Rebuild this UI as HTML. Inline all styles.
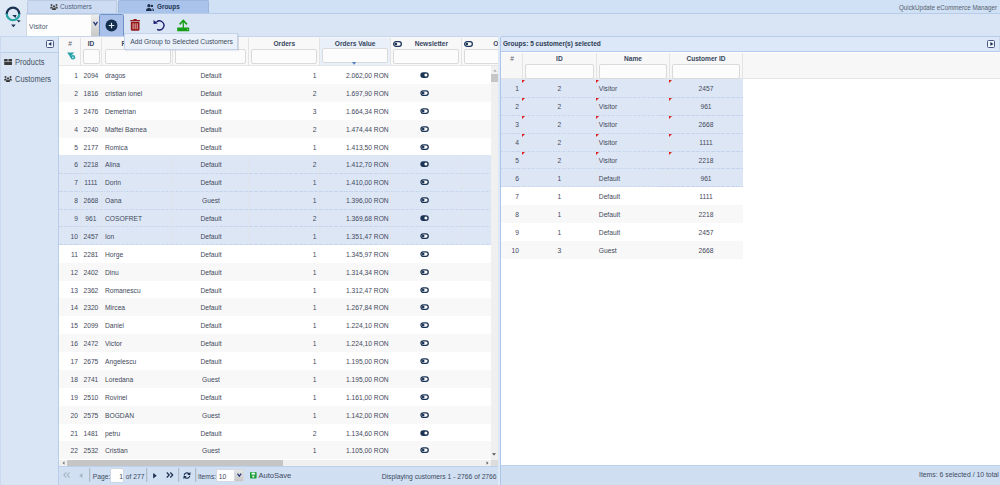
<!DOCTYPE html>
<html><head><meta charset="utf-8">
<style>
*{box-sizing:border-box;margin:0;padding:0}
html,body{width:1000px;height:485px;overflow:hidden}
body{position:relative;white-space:nowrap;background:#d0e0f5;font-family:"Liberation Sans",sans-serif;font-size:6.7px;color:#3c4858}
.a{position:absolute}
.tab{position:absolute;top:0;height:13.5px;border:1px solid #bccbdf;border-bottom:none;border-radius:2px 2px 0 0}
.hs{position:absolute;width:1px;background:#e4e4e4}
.ht{position:absolute;text-align:center;font-weight:bold;color:#36465e;font-size:6.6px;line-height:8px}
.fi{position:absolute;height:15px;background:#fcfcfc;border:1px solid #dadada;border-radius:2px}
.r,.gr{position:absolute;left:0;height:17.875px;background:#fff}
.r{width:432px}
.gr{width:241.5px}
.r.alt,.gr.alt{background:#f8f8f8}
.r.sel,.gr.sel{background:#dde6f5}
.r.sel::after,.gr.sel::after{content:"";position:absolute;left:0;right:0;bottom:-0.6px;height:1px;z-index:2;background:repeating-linear-gradient(90deg,#c6d5ee 0 1.5px,transparent 1.5px 2.5px)}
.c{position:absolute;top:1.1px;line-height:17.875px;color:#3f495b}
.tg{position:absolute;top:6px;line-height:0}
.vs{position:absolute;top:0;width:1px;height:100%;background:#dfe3ec}
.fl{position:absolute;top:0.8px;z-index:3;width:0;height:0;border-top:3px solid #e01b1b;border-right:3px solid transparent}
.sep{position:absolute;width:1px;background:#b1bbc7;box-shadow:0.5px 0 0 #c4ccd6}
.pt{position:absolute;color:#3d4a5f;line-height:8px}
</style></head><body>

<!-- logo area -->
<div class="a" style="left:0;top:0;width:26.6px;height:37px;background:#dfe8f5"></div>
<svg class="a" style="left:0;top:0" width="26" height="30" viewBox="0 0 26 30">
  <path d="M6.7 14 A6.3 6.3 0 0 1 19.3 14" fill="none" stroke="#1a3352" stroke-width="2.3"/>
  <path d="M19.3 13.8 A6.3 6.3 0 0 1 6.7 13.8" fill="none" stroke="#2aa6a6" stroke-width="2.3"/>
  <path d="M12.2 14.9 L16.5 15 L15.5 17.9 Z" fill="#1a3352"/>
  <path d="M16.8 20.1 L20.7 20.6 L18.6 22.4 Z" fill="#1a3352"/>
  <path d="M11.1 24.4 L15.7 24.4 L13.4 27.2 Z" fill="#1a3352"/>
</svg>

<!-- tabs -->
<div class="tab" style="left:26.5px;width:90px;background:#cddcf2"></div>
<svg class="a" style="left:49.5px;top:3.6px" width="8" height="6.4" viewBox="0 0 8 6.4"><circle cx="1.5" cy="1.1" r="1" fill="#4a4a4a"/><circle cx="6.5" cy="1.1" r="1" fill="#4a4a4a"/><circle cx="4" cy="2.4" r="1.1" fill="#4a4a4a"/><path d="M0 4.4Q0 2.4 1.5 2.4Q2.6 2.4 2.8 3.3L2.2 4.4Z M8 4.4Q8 2.4 6.5 2.4Q5.4 2.4 5.2 3.3L5.8 4.4Z M1.7 6.4Q1.7 3.8 4 3.8Q6.3 3.8 6.3 6.4Z" fill="#4a4a4a"/></svg>
<div class="a" style="left:59.8px;top:2.6px;color:#53627a;font-size:7.3px;line-height:8px;transform:scaleX(0.9);transform-origin:0 0">Customers</div>
<div class="tab" style="left:117.8px;width:91px;background:#a9c3ea;border-color:#a0b7dc"></div>
<svg class="a" style="left:146px;top:3.5px" width="8" height="7" viewBox="0 0 8 7"><circle cx="2.9" cy="1.7" r="1.6" fill="#1c2e4a"/><path d="M0 7 Q0 3.9 2.9 3.9 Q5.8 3.9 5.8 7Z" fill="#1c2e4a"/><circle cx="5.9" cy="1.9" r="1.2" fill="#1c2e4a"/><path d="M6.2 3.9 Q8 4.2 8 7 L6.6 7 Q6.6 5 6.2 3.9Z" fill="#1c2e4a"/></svg>
<div class="a" style="left:156.5px;top:3.1px;color:#1e3350;font-weight:bold;font-size:7.1px;line-height:8px;transform:scaleX(0.9);transform-origin:0 0">Groups</div>
<div class="a" style="left:899px;top:3.5px;font-size:7px;color:#56626f;line-height:8px;transform:scaleX(0.89);transform-origin:0 0">QuickUpdate eCommerce Manager</div>

<!-- toolbar -->
<div class="a" style="left:26px;top:13px;width:974px;height:24px;background:#d9e5f5;border-top:1px solid #b6cdea"></div>
<div class="a" style="left:26.2px;top:14.2px;width:73px;height:22.6px;background:#fdfdfd;border:1px solid #d2d9e2;border-radius:2px"></div>
<div class="a" style="left:91.2px;top:15.2px;width:7.6px;height:20.4px;background:linear-gradient(#ececec,#c8c8c8)"></div>
<div class="a" style="left:29.2px;top:22.6px;color:#4b5a70;font-size:7.2px;line-height:8px;transform:scaleX(0.94);transform-origin:0 0">Visitor</div>
<svg class="a" style="left:92.5px;top:21.3px" width="5" height="5" viewBox="0 0 5 5"><path d="M0.5 0.8 L2.5 3.8 L4.5 0.8" fill="none" stroke="#22357a" stroke-width="1.3"/></svg>
<div class="a" style="left:99.3px;top:14px;width:24.4px;height:22.6px;background:#a8c0ea;border:1px solid #7091c8;border-radius:1.5px"></div>
<svg class="a" style="left:105.3px;top:18.7px" width="13" height="13" viewBox="0 0 13 13"><circle cx="6.5" cy="6.5" r="5.95" fill="#142f4e"/><path d="M6.5 3.7V9.3M3.7 6.5H9.3" stroke="#e2eaf5" stroke-width="1.15"/></svg>
<svg class="a" style="left:130px;top:19px" width="11" height="12" viewBox="0 0 11 12"><rect x="0.1" y="0.9" width="10" height="1.3" rx="0.6" fill="#951616"/><rect x="3.4" y="0.1" width="3.4" height="1.3" rx="0.6" fill="#951616"/><path d="M0.8 2.8H9.5V10.2Q9.5 11.8 8 11.8H2.3Q0.8 11.8 0.8 10.2Z" fill="#951616"/><path d="M3.1 4.3V10.2M5.15 4.3V10.2M7.2 4.3V10.2" stroke="#eccaca" stroke-width="0.9"/></svg>
<svg class="a" style="left:153px;top:19px" width="12" height="12" viewBox="0 0 12 12"><path d="M3.5 2.95 A4.5 4.5 0 1 1 4.15 10.3" fill="none" stroke="#17186c" stroke-width="1.35"/><path d="M0.5 0.9 L0.6 5 L4.9 4.6 Z" fill="#17186c"/></svg>
<svg class="a" style="left:176.8px;top:18.5px" width="13" height="13" viewBox="0 0 13 13"><path d="M2.7 5.3 L6.3 1.4 L9.9 5.3" fill="none" stroke="#169e16" stroke-width="1.7"/><path d="M6.3 1.6V9" stroke="#169e16" stroke-width="1.3"/><rect x="0.2" y="8.6" width="12" height="3.7" rx="0.6" fill="#169e16"/><rect x="10.2" y="9.9" width="0.8" height="1" fill="#9fe09f"/></svg>

<!-- sidebar -->
<div class="a" style="left:0;top:36.4px;width:59px;height:448.6px;background:#d9e5f5;border-right:1px solid #b8cdea;border-top:1px solid #c6d8f0;border-left:1px solid #c9d9ef"></div>
<div class="a" style="left:1px;top:37.4px;width:57px;height:15.6px;background:#dae6f6;border-bottom:1px solid #bcd0ec"></div>
<div class="a" style="left:45.9px;top:40.1px;width:8.2px;height:7.8px;border:1px solid #4a5886;border-radius:1.5px;background:#eef4fc"></div>
<svg class="a" style="left:48.2px;top:42.2px" width="4" height="4" viewBox="0 0 4 4"><path d="M3.3 0.1 L0.3 1.9 L3.3 3.8Z" fill="#14284c"/></svg>
<svg class="a" style="left:4px;top:58.9px" width="8.2" height="6.4" viewBox="0 0 8.2 6.4"><rect x="0" y="0" width="3.7" height="2.5" rx="0.5" fill="#3a3a3a"/><rect x="4.4" y="0" width="3.8" height="2.5" rx="0.5" fill="#3a3a3a"/><path d="M0.2 3.1H8V5.2Q8 6.3 6.9 6.3H1.3Q0.2 6.3 0.2 5.2Z" fill="#3a3a3a"/></svg>
<div class="a" style="left:14.8px;top:57.6px;font-size:8.3px;color:#445064;line-height:9px;transform:scaleX(0.9);transform-origin:0 0">Products</div>
<svg class="a" style="left:4px;top:75.5px" width="8" height="6.4" viewBox="0 0 8 6.4"><circle cx="1.5" cy="1.1" r="1" fill="#3a3a3a"/><circle cx="6.5" cy="1.1" r="1" fill="#3a3a3a"/><circle cx="4" cy="2.4" r="1.1" fill="#3a3a3a"/><path d="M0 4.4Q0 2.4 1.5 2.4Q2.6 2.4 2.8 3.3L2.2 4.4Z M8 4.4Q8 2.4 6.5 2.4Q5.4 2.4 5.2 3.3L5.8 4.4Z M1.7 6.4Q1.7 3.8 4 3.8Q6.3 3.8 6.3 6.4Z" fill="#3a3a3a"/></svg>
<div class="a" style="left:14.8px;top:74.7px;font-size:8.3px;color:#445064;line-height:9px;transform:scaleX(0.9);transform-origin:0 0">Customers</div>

<!-- main grid -->
<div class="a" style="left:59px;top:36.8px;width:439px;height:429.2px;background:#fff"></div>
<div class="a" style="left:59px;top:36.2px;width:439px;height:29.8px;background:#f8f8f8;border-top:1px solid #c4d5ec;border-bottom:1px solid #e6e6e6"></div>
<div class="a" style="left:320px;top:37.8px;width:70px;height:27.4px;background:#e9f0fa"></div>
<i class="hs" style="left:80px;top:37.8px;height:28px"></i>
<i class="hs" style="left:101px;top:37.8px;height:28px"></i>
<i class="hs" style="left:172px;top:37.8px;height:28px"></i>
<i class="hs" style="left:248px;top:37.8px;height:28px"></i>
<i class="hs" style="left:319px;top:37.8px;height:28px"></i>
<i class="hs" style="left:390px;top:37.8px;height:28px"></i>
<i class="hs" style="left:461px;top:37.8px;height:28px"></i>
<div class="ht" style="left:59px;width:22px;top:40.4px;font-weight:normal;color:#56606e">#</div>
<svg class="a" style="left:66.5px;top:51.6px" width="9" height="8" viewBox="0 0 9 8"><path d="M0.1 0.4 H7.3 L4.4 3.6 L3.4 6.1 L2.6 4Z" fill="#27a2a8"/><circle cx="5.9" cy="5.3" r="2.3" fill="#27a2a8"/><circle cx="5.9" cy="5.4" r="0.8" fill="#d5eef0"/></svg>
<div class="ht" style="left:80.5px;width:21px;top:40.4px">ID</div>
<div class="ht" style="left:102.8px;width:71.7px;top:40.4px">First Name</div>
<div class="ht" style="left:249px;width:70.5px;top:40.4px">Orders</div>
<div class="ht" style="left:319.5px;width:71.3px;top:39.6px">Orders Value</div>
<div class="ht" style="left:396px;width:70.7px;top:40.4px">Newsletter</div>
<div class="ht" style="left:493.2px;top:40.4px;width:4.8px;overflow:hidden;text-align:left">Optin</div>
<svg class="a" style="left:392.8px;top:41px" width="9" height="6" viewBox="0 0 9 6"><rect x="0.65" y="0.65" width="7.7" height="4.7" rx="2.35" fill="#fff" stroke="#1d3557" stroke-width="1.3"/><circle cx="2.9" cy="3" r="1.3" fill="#1d3557"/></svg>
<svg class="a" style="left:463.6px;top:41px" width="9" height="6" viewBox="0 0 9 6"><rect x="0.65" y="0.65" width="7.7" height="4.7" rx="2.35" fill="#fff" stroke="#1d3557" stroke-width="1.3"/><circle cx="2.9" cy="3" r="1.3" fill="#1d3557"/></svg>
<div class="fi" style="left:83px;top:49px;width:17px"></div>
<div class="fi" style="left:105px;top:49px;width:66px"></div>
<div class="fi" style="left:175px;top:49px;width:71px"></div>
<div class="fi" style="left:251px;top:49px;width:66px"></div>
<div class="fi" style="left:322px;top:48px;width:66px"></div>
<div class="fi" style="left:393px;top:49px;width:66px"></div>
<div class="fi" style="left:464px;top:49px;width:66px"></div>
<svg class="a" style="left:352px;top:62px" width="4.2" height="2.6" viewBox="0 0 4.2 2.6"><path d="M0 0H4.2L2.6 2.3Q2.1 2.7 1.6 2.3Z" fill="#5a86c6"/></svg>
<div class="a" style="left:59px;top:66px;width:432px;height:393.6px;overflow:hidden">
<div class="a" style="left:0;top:-66px;width:432px;height:466px">
<div class="r" style="top:66.000px"><span class="c" style="left:0;width:19px;text-align:right">1</span><span class="c" style="left:21.5px;width:20.8px;text-align:center">2094</span><span class="c" style="left:46px">dragos</span><span class="c" style="left:114px;width:76px;text-align:center">Default</span><span class="c" style="left:190px;width:67.5px;text-align:right">1</span><span class="c" style="left:260.5px;width:69.2px;text-align:right">2.062,00 RON</span><span class="tg" style="left:361.2px"><svg width="9" height="6" viewBox="0 0 9 6"><rect x="0.3" y="0.2" width="8.5" height="5.8" rx="2.9" fill="#1b3354"/><circle cx="5.9" cy="3.1" r="1.5" fill="#fff"/></svg></span></div>
<div class="r alt" style="top:83.875px"><span class="c" style="left:0;width:19px;text-align:right">2</span><span class="c" style="left:21.5px;width:20.8px;text-align:center">1816</span><span class="c" style="left:46px">cristian ionel</span><span class="c" style="left:114px;width:76px;text-align:center">Default</span><span class="c" style="left:190px;width:67.5px;text-align:right">2</span><span class="c" style="left:260.5px;width:69.2px;text-align:right">1.697,90 RON</span><span class="tg" style="left:361.2px"><svg width="9" height="6" viewBox="0 0 9 6"><rect x="0.95" y="0.85" width="7.3" height="4.5" rx="2.25" fill="#fff" stroke="#1b3354" stroke-width="1.3"/><circle cx="3.2" cy="3.1" r="1.3" fill="#1b3354"/></svg></span></div>
<div class="r" style="top:101.750px"><span class="c" style="left:0;width:19px;text-align:right">3</span><span class="c" style="left:21.5px;width:20.8px;text-align:center">2476</span><span class="c" style="left:46px">Demetrian</span><span class="c" style="left:114px;width:76px;text-align:center">Default</span><span class="c" style="left:190px;width:67.5px;text-align:right">3</span><span class="c" style="left:260.5px;width:69.2px;text-align:right">1.664,34 RON</span><span class="tg" style="left:361.2px"><svg width="9" height="6" viewBox="0 0 9 6"><rect x="0.95" y="0.85" width="7.3" height="4.5" rx="2.25" fill="#fff" stroke="#1b3354" stroke-width="1.3"/><circle cx="3.2" cy="3.1" r="1.3" fill="#1b3354"/></svg></span></div>
<div class="r alt" style="top:119.625px"><span class="c" style="left:0;width:19px;text-align:right">4</span><span class="c" style="left:21.5px;width:20.8px;text-align:center">2240</span><span class="c" style="left:46px">Maftei Barnea</span><span class="c" style="left:114px;width:76px;text-align:center">Default</span><span class="c" style="left:190px;width:67.5px;text-align:right">2</span><span class="c" style="left:260.5px;width:69.2px;text-align:right">1.474,44 RON</span><span class="tg" style="left:361.2px"><svg width="9" height="6" viewBox="0 0 9 6"><rect x="0.95" y="0.85" width="7.3" height="4.5" rx="2.25" fill="#fff" stroke="#1b3354" stroke-width="1.3"/><circle cx="3.2" cy="3.1" r="1.3" fill="#1b3354"/></svg></span></div>
<div class="r" style="top:137.500px"><span class="c" style="left:0;width:19px;text-align:right">5</span><span class="c" style="left:21.5px;width:20.8px;text-align:center">2177</span><span class="c" style="left:46px">Romica</span><span class="c" style="left:114px;width:76px;text-align:center">Default</span><span class="c" style="left:190px;width:67.5px;text-align:right">1</span><span class="c" style="left:260.5px;width:69.2px;text-align:right">1.413,50 RON</span><span class="tg" style="left:361.2px"><svg width="9" height="6" viewBox="0 0 9 6"><rect x="0.95" y="0.85" width="7.3" height="4.5" rx="2.25" fill="#fff" stroke="#1b3354" stroke-width="1.3"/><circle cx="3.2" cy="3.1" r="1.3" fill="#1b3354"/></svg></span></div>
<div class="r sel" style="top:155.375px"><i class="vs" style="left:21px"></i><i class="vs" style="left:42px"></i><i class="vs" style="left:113px"></i><i class="vs" style="left:189px"></i><i class="vs" style="left:260px"></i><i class="vs" style="left:331px"></i><i class="vs" style="left:402px"></i><span class="c" style="left:0;width:19px;text-align:right">6</span><span class="c" style="left:21.5px;width:20.8px;text-align:center">2218</span><span class="c" style="left:46px">Alina</span><span class="c" style="left:114px;width:76px;text-align:center">Default</span><span class="c" style="left:190px;width:67.5px;text-align:right">2</span><span class="c" style="left:260.5px;width:69.2px;text-align:right">1.412,70 RON</span><span class="tg" style="left:361.2px"><svg width="9" height="6" viewBox="0 0 9 6"><rect x="0.3" y="0.2" width="8.5" height="5.8" rx="2.9" fill="#1b3354"/><circle cx="5.9" cy="3.1" r="1.5" fill="#fff"/></svg></span></div>
<div class="r sel" style="top:173.250px"><i class="vs" style="left:21px"></i><i class="vs" style="left:42px"></i><i class="vs" style="left:113px"></i><i class="vs" style="left:189px"></i><i class="vs" style="left:260px"></i><i class="vs" style="left:331px"></i><i class="vs" style="left:402px"></i><span class="c" style="left:0;width:19px;text-align:right">7</span><span class="c" style="left:21.5px;width:20.8px;text-align:center">1111</span><span class="c" style="left:46px">Dorin</span><span class="c" style="left:114px;width:76px;text-align:center">Default</span><span class="c" style="left:190px;width:67.5px;text-align:right">1</span><span class="c" style="left:260.5px;width:69.2px;text-align:right">1.410,00 RON</span><span class="tg" style="left:361.2px"><svg width="9" height="6" viewBox="0 0 9 6"><rect x="0.95" y="0.85" width="7.3" height="4.5" rx="2.25" fill="#fff" stroke="#1b3354" stroke-width="1.3"/><circle cx="3.2" cy="3.1" r="1.3" fill="#1b3354"/></svg></span></div>
<div class="r sel" style="top:191.125px"><i class="vs" style="left:21px"></i><i class="vs" style="left:42px"></i><i class="vs" style="left:113px"></i><i class="vs" style="left:189px"></i><i class="vs" style="left:260px"></i><i class="vs" style="left:331px"></i><i class="vs" style="left:402px"></i><span class="c" style="left:0;width:19px;text-align:right">8</span><span class="c" style="left:21.5px;width:20.8px;text-align:center">2668</span><span class="c" style="left:46px">Oana</span><span class="c" style="left:114px;width:76px;text-align:center">Guest</span><span class="c" style="left:190px;width:67.5px;text-align:right">1</span><span class="c" style="left:260.5px;width:69.2px;text-align:right">1.396,00 RON</span><span class="tg" style="left:361.2px"><svg width="9" height="6" viewBox="0 0 9 6"><rect x="0.95" y="0.85" width="7.3" height="4.5" rx="2.25" fill="#fff" stroke="#1b3354" stroke-width="1.3"/><circle cx="3.2" cy="3.1" r="1.3" fill="#1b3354"/></svg></span></div>
<div class="r sel" style="top:209.000px"><i class="vs" style="left:21px"></i><i class="vs" style="left:42px"></i><i class="vs" style="left:113px"></i><i class="vs" style="left:189px"></i><i class="vs" style="left:260px"></i><i class="vs" style="left:331px"></i><i class="vs" style="left:402px"></i><span class="c" style="left:0;width:19px;text-align:right">9</span><span class="c" style="left:21.5px;width:20.8px;text-align:center">961</span><span class="c" style="left:46px">COSOFRET</span><span class="c" style="left:114px;width:76px;text-align:center">Default</span><span class="c" style="left:190px;width:67.5px;text-align:right">2</span><span class="c" style="left:260.5px;width:69.2px;text-align:right">1.369,68 RON</span><span class="tg" style="left:361.2px"><svg width="9" height="6" viewBox="0 0 9 6"><rect x="0.3" y="0.2" width="8.5" height="5.8" rx="2.9" fill="#1b3354"/><circle cx="5.9" cy="3.1" r="1.5" fill="#fff"/></svg></span></div>
<div class="r sel" style="top:226.875px"><i class="vs" style="left:21px"></i><i class="vs" style="left:42px"></i><i class="vs" style="left:113px"></i><i class="vs" style="left:189px"></i><i class="vs" style="left:260px"></i><i class="vs" style="left:331px"></i><i class="vs" style="left:402px"></i><span class="c" style="left:0;width:19px;text-align:right">10</span><span class="c" style="left:21.5px;width:20.8px;text-align:center">2457</span><span class="c" style="left:46px">Ion</span><span class="c" style="left:114px;width:76px;text-align:center">Default</span><span class="c" style="left:190px;width:67.5px;text-align:right">1</span><span class="c" style="left:260.5px;width:69.2px;text-align:right">1.351,47 RON</span><span class="tg" style="left:361.2px"><svg width="9" height="6" viewBox="0 0 9 6"><rect x="0.95" y="0.85" width="7.3" height="4.5" rx="2.25" fill="#fff" stroke="#1b3354" stroke-width="1.3"/><circle cx="3.2" cy="3.1" r="1.3" fill="#1b3354"/></svg></span></div>
<div class="r" style="top:244.750px"><span class="c" style="left:0;width:19px;text-align:right">11</span><span class="c" style="left:21.5px;width:20.8px;text-align:center">2281</span><span class="c" style="left:46px">Horge</span><span class="c" style="left:114px;width:76px;text-align:center">Default</span><span class="c" style="left:190px;width:67.5px;text-align:right">1</span><span class="c" style="left:260.5px;width:69.2px;text-align:right">1.345,97 RON</span><span class="tg" style="left:361.2px"><svg width="9" height="6" viewBox="0 0 9 6"><rect x="0.95" y="0.85" width="7.3" height="4.5" rx="2.25" fill="#fff" stroke="#1b3354" stroke-width="1.3"/><circle cx="3.2" cy="3.1" r="1.3" fill="#1b3354"/></svg></span></div>
<div class="r alt" style="top:262.625px"><span class="c" style="left:0;width:19px;text-align:right">12</span><span class="c" style="left:21.5px;width:20.8px;text-align:center">2402</span><span class="c" style="left:46px">Dinu</span><span class="c" style="left:114px;width:76px;text-align:center">Default</span><span class="c" style="left:190px;width:67.5px;text-align:right">1</span><span class="c" style="left:260.5px;width:69.2px;text-align:right">1.314,34 RON</span><span class="tg" style="left:361.2px"><svg width="9" height="6" viewBox="0 0 9 6"><rect x="0.95" y="0.85" width="7.3" height="4.5" rx="2.25" fill="#fff" stroke="#1b3354" stroke-width="1.3"/><circle cx="3.2" cy="3.1" r="1.3" fill="#1b3354"/></svg></span></div>
<div class="r" style="top:280.500px"><span class="c" style="left:0;width:19px;text-align:right">13</span><span class="c" style="left:21.5px;width:20.8px;text-align:center">2362</span><span class="c" style="left:46px">Romanescu</span><span class="c" style="left:114px;width:76px;text-align:center">Default</span><span class="c" style="left:190px;width:67.5px;text-align:right">1</span><span class="c" style="left:260.5px;width:69.2px;text-align:right">1.312,47 RON</span><span class="tg" style="left:361.2px"><svg width="9" height="6" viewBox="0 0 9 6"><rect x="0.95" y="0.85" width="7.3" height="4.5" rx="2.25" fill="#fff" stroke="#1b3354" stroke-width="1.3"/><circle cx="3.2" cy="3.1" r="1.3" fill="#1b3354"/></svg></span></div>
<div class="r alt" style="top:298.375px"><span class="c" style="left:0;width:19px;text-align:right">14</span><span class="c" style="left:21.5px;width:20.8px;text-align:center">2320</span><span class="c" style="left:46px">Mircea</span><span class="c" style="left:114px;width:76px;text-align:center">Default</span><span class="c" style="left:190px;width:67.5px;text-align:right">1</span><span class="c" style="left:260.5px;width:69.2px;text-align:right">1.267,84 RON</span><span class="tg" style="left:361.2px"><svg width="9" height="6" viewBox="0 0 9 6"><rect x="0.95" y="0.85" width="7.3" height="4.5" rx="2.25" fill="#fff" stroke="#1b3354" stroke-width="1.3"/><circle cx="3.2" cy="3.1" r="1.3" fill="#1b3354"/></svg></span></div>
<div class="r" style="top:316.250px"><span class="c" style="left:0;width:19px;text-align:right">15</span><span class="c" style="left:21.5px;width:20.8px;text-align:center">2099</span><span class="c" style="left:46px">Daniel</span><span class="c" style="left:114px;width:76px;text-align:center">Default</span><span class="c" style="left:190px;width:67.5px;text-align:right">1</span><span class="c" style="left:260.5px;width:69.2px;text-align:right">1.224,10 RON</span><span class="tg" style="left:361.2px"><svg width="9" height="6" viewBox="0 0 9 6"><rect x="0.95" y="0.85" width="7.3" height="4.5" rx="2.25" fill="#fff" stroke="#1b3354" stroke-width="1.3"/><circle cx="3.2" cy="3.1" r="1.3" fill="#1b3354"/></svg></span></div>
<div class="r alt" style="top:334.125px"><span class="c" style="left:0;width:19px;text-align:right">16</span><span class="c" style="left:21.5px;width:20.8px;text-align:center">2472</span><span class="c" style="left:46px">Victor</span><span class="c" style="left:114px;width:76px;text-align:center">Default</span><span class="c" style="left:190px;width:67.5px;text-align:right">1</span><span class="c" style="left:260.5px;width:69.2px;text-align:right">1.224,10 RON</span><span class="tg" style="left:361.2px"><svg width="9" height="6" viewBox="0 0 9 6"><rect x="0.95" y="0.85" width="7.3" height="4.5" rx="2.25" fill="#fff" stroke="#1b3354" stroke-width="1.3"/><circle cx="3.2" cy="3.1" r="1.3" fill="#1b3354"/></svg></span></div>
<div class="r" style="top:352.000px"><span class="c" style="left:0;width:19px;text-align:right">17</span><span class="c" style="left:21.5px;width:20.8px;text-align:center">2675</span><span class="c" style="left:46px">Angelescu</span><span class="c" style="left:114px;width:76px;text-align:center">Default</span><span class="c" style="left:190px;width:67.5px;text-align:right">1</span><span class="c" style="left:260.5px;width:69.2px;text-align:right">1.195,00 RON</span><span class="tg" style="left:361.2px"><svg width="9" height="6" viewBox="0 0 9 6"><rect x="0.95" y="0.85" width="7.3" height="4.5" rx="2.25" fill="#fff" stroke="#1b3354" stroke-width="1.3"/><circle cx="3.2" cy="3.1" r="1.3" fill="#1b3354"/></svg></span></div>
<div class="r alt" style="top:369.875px"><span class="c" style="left:0;width:19px;text-align:right">18</span><span class="c" style="left:21.5px;width:20.8px;text-align:center">2741</span><span class="c" style="left:46px">Loredana</span><span class="c" style="left:114px;width:76px;text-align:center">Guest</span><span class="c" style="left:190px;width:67.5px;text-align:right">1</span><span class="c" style="left:260.5px;width:69.2px;text-align:right">1.195,00 RON</span><span class="tg" style="left:361.2px"><svg width="9" height="6" viewBox="0 0 9 6"><rect x="0.95" y="0.85" width="7.3" height="4.5" rx="2.25" fill="#fff" stroke="#1b3354" stroke-width="1.3"/><circle cx="3.2" cy="3.1" r="1.3" fill="#1b3354"/></svg></span></div>
<div class="r" style="top:387.750px"><span class="c" style="left:0;width:19px;text-align:right">19</span><span class="c" style="left:21.5px;width:20.8px;text-align:center">2510</span><span class="c" style="left:46px">Rovinel</span><span class="c" style="left:114px;width:76px;text-align:center">Default</span><span class="c" style="left:190px;width:67.5px;text-align:right">1</span><span class="c" style="left:260.5px;width:69.2px;text-align:right">1.161,00 RON</span><span class="tg" style="left:361.2px"><svg width="9" height="6" viewBox="0 0 9 6"><rect x="0.95" y="0.85" width="7.3" height="4.5" rx="2.25" fill="#fff" stroke="#1b3354" stroke-width="1.3"/><circle cx="3.2" cy="3.1" r="1.3" fill="#1b3354"/></svg></span></div>
<div class="r alt" style="top:405.625px"><span class="c" style="left:0;width:19px;text-align:right">20</span><span class="c" style="left:21.5px;width:20.8px;text-align:center">2575</span><span class="c" style="left:46px">BOGDAN</span><span class="c" style="left:114px;width:76px;text-align:center">Guest</span><span class="c" style="left:190px;width:67.5px;text-align:right">1</span><span class="c" style="left:260.5px;width:69.2px;text-align:right">1.142,00 RON</span><span class="tg" style="left:361.2px"><svg width="9" height="6" viewBox="0 0 9 6"><rect x="0.95" y="0.85" width="7.3" height="4.5" rx="2.25" fill="#fff" stroke="#1b3354" stroke-width="1.3"/><circle cx="3.2" cy="3.1" r="1.3" fill="#1b3354"/></svg></span></div>
<div class="r" style="top:423.500px"><span class="c" style="left:0;width:19px;text-align:right">21</span><span class="c" style="left:21.5px;width:20.8px;text-align:center">1481</span><span class="c" style="left:46px">petru</span><span class="c" style="left:114px;width:76px;text-align:center">Default</span><span class="c" style="left:190px;width:67.5px;text-align:right">2</span><span class="c" style="left:260.5px;width:69.2px;text-align:right">1.134,60 RON</span><span class="tg" style="left:361.2px"><svg width="9" height="6" viewBox="0 0 9 6"><rect x="0.3" y="0.2" width="8.5" height="5.8" rx="2.9" fill="#1b3354"/><circle cx="5.9" cy="3.1" r="1.5" fill="#fff"/></svg></span></div>
<div class="r alt" style="top:441.375px"><span class="c" style="left:0;width:19px;text-align:right">22</span><span class="c" style="left:21.5px;width:20.8px;text-align:center">2532</span><span class="c" style="left:46px">Cristian</span><span class="c" style="left:114px;width:76px;text-align:center">Guest</span><span class="c" style="left:190px;width:67.5px;text-align:right">1</span><span class="c" style="left:260.5px;width:69.2px;text-align:right">1.105,00 RON</span><span class="tg" style="left:361.2px"><svg width="9" height="6" viewBox="0 0 9 6"><rect x="0.95" y="0.85" width="7.3" height="4.5" rx="2.25" fill="#fff" stroke="#1b3354" stroke-width="1.3"/><circle cx="3.2" cy="3.1" r="1.3" fill="#1b3354"/></svg></span></div>
</div></div>
<!-- vscroll -->
<div class="a" style="left:491px;top:66px;width:7px;height:393.6px;background:#f0f0f0"></div>
<div class="a" style="left:491.4px;top:74px;width:6.4px;height:8px;background:#c6c6c6"></div>
<svg class="a" style="left:492.5px;top:69px" width="4" height="3" viewBox="0 0 4 3"><path d="M0.2 2.5H3.8L2 0.7Z" fill="#a0a0a0"/></svg>
<svg class="a" style="left:492.3px;top:453.2px" width="4" height="3" viewBox="0 0 4 3"><path d="M0 0.3H4L2 2.6Z" fill="#505050"/></svg>
<!-- hscroll -->
<div class="a" style="left:59px;top:459.6px;width:432px;height:6.4px;background:#f0f0f0"></div>
<div class="a" style="left:67px;top:459.9px;width:216.3px;height:5.8px;background:#c5c5c5"></div>
<svg class="a" style="left:61.5px;top:461px" width="3" height="4" viewBox="0 0 3 4"><path d="M2.5 0.2V3.8L0.5 2Z" fill="#707070"/></svg>
<svg class="a" style="left:485.5px;top:461px" width="3" height="4" viewBox="0 0 3 4"><path d="M0.5 0.2V3.8L2.5 2Z" fill="#606060"/></svg>
<div class="a" style="left:491px;top:459.6px;width:7px;height:6.4px;background:#dcdcdc"></div>

<!-- tooltip -->
<div class="a" style="left:124px;top:33.2px;width:114.2px;height:16.8px;background:#eaf1fb;border:1px solid #c4d3e8;box-shadow:0.5px 1px 1px rgba(60,80,110,0.18)"></div>
<div class="a" style="left:130.2px;top:38.1px;font-size:6.75px;line-height:8px;color:#3f4c60">Add Group to Selected Customers</div>

<!-- pager -->
<div class="a" style="left:59px;top:466px;width:439px;height:19px;background:#d0dff1;border-top:1px solid #bad0ee"></div>
<svg class="a" style="left:62.8px;top:472.2px" width="8" height="6" viewBox="0 0 8 6"><path d="M3.3 0.4L0.9 3L3.3 5.6M6.6 0.4L4.2 3L6.6 5.6" fill="none" stroke="#a7b3c4" stroke-width="1.1"/></svg>
<svg class="a" style="left:78.6px;top:472.8px" width="4" height="5.4" viewBox="0 0 4 5.4"><path d="M3.4 0V5.2L0.2 2.6Z" fill="#a7b3c4"/></svg>
<i class="sep" style="left:89.2px;top:468.4px;height:14px"></i>
<div class="pt" style="left:92.8px;top:472.6px">Page:</div>
<div class="a" style="left:110.2px;top:468px;width:13.8px;height:15px;background:#fff;border:1px solid #cfd7e1;border-radius:2px"></div>
<div class="pt" style="left:119.2px;top:472.6px">1</div>
<div class="pt" style="left:125.8px;top:472.6px">of 277</div>
<i class="sep" style="left:146px;top:468.4px;height:14px"></i>
<svg class="a" style="left:152.8px;top:472.6px" width="4" height="6" viewBox="0 0 4 6"><path d="M0.2 0V5.5L3.7 2.75Z" fill="#1b2c4c"/></svg>
<svg class="a" style="left:165.5px;top:472.3px" width="8" height="6" viewBox="0 0 8 6"><path d="M0.8 0.5L3.2 3L0.8 5.5M4.3 0.5L6.7 3L4.3 5.5" fill="none" stroke="#1b2c4c" stroke-width="1.2"/></svg>
<i class="sep" style="left:178.2px;top:468.4px;height:14px"></i>
<svg class="a" style="left:182.8px;top:471.8px" width="8" height="7.2" viewBox="0 0 8 7.2"><path d="M1.1 3.4 A2.8 2.8 0 0 1 6 1.9" fill="none" stroke="#1b2c4c" stroke-width="1.1"/><path d="M6.8 3.8 A2.8 2.8 0 0 1 1.9 5.3" fill="none" stroke="#1b2c4c" stroke-width="1.1"/><path d="M7.4 0V3.1H4.3Z M0.5 7.2V4.1H3.6Z" fill="#1b2c4c"/></svg>
<i class="sep" style="left:195px;top:468.4px;height:14px"></i>
<div class="pt" style="left:197.9px;top:472.6px">Items:</div>
<div class="a" style="left:216.4px;top:469px;width:19px;height:13.4px;background:#fdfdfd;border:1px solid #d3dae3;border-radius:2px 0 0 2px"></div>
<div class="pt" style="left:218.8px;top:472.6px">10</div>
<div class="a" style="left:235.3px;top:469px;width:9.2px;height:13.4px;background:linear-gradient(#e6e6e6,#c6c6c6);border:1px solid #d3dae3;border-left:none"></div>
<svg class="a" style="left:237.4px;top:472.6px" width="5" height="4" viewBox="0 0 5 4"><path d="M0.4 0.6 L2.3 3.2 L4.2 0.6" fill="none" stroke="#22357a" stroke-width="1.2"/></svg>
<svg class="a" style="left:249.6px;top:472.2px" width="7" height="7" viewBox="0 0 7 7"><rect x="0" y="0" width="6.6" height="6.6" rx="0.8" fill="#1f9d3a"/><rect x="1.5" y="0.6" width="3.6" height="2" fill="#eaf7ee"/><circle cx="3.3" cy="4.6" r="1.1" fill="#eaf7ee"/></svg>
<div class="pt" style="left:258.4px;top:472.3px;font-size:7.6px">AutoSave</div>
<div class="pt" style="left:381.7px;top:473.4px;font-size:6.74px">Displaying customers 1 - 2766 of 2766</div>

<!-- splitter -->
<div class="a" style="left:498px;top:36.8px;width:2px;height:448.2px;background:#dfe8f5"></div>

<!-- right panel -->
<div class="a" style="left:500px;top:36.5px;width:500px;height:448.5px;background:#fff;border-left:1px solid #aac6ec"></div>
<div class="a" style="left:501px;top:36.2px;width:499px;height:16.3px;background:#dce7f7;border-bottom:1px solid #b3cbec;border-top:1px solid #b7cde9"></div>
<div class="a" style="left:503px;top:40.2px;line-height:8px;font-weight:bold;color:#2c3b54;font-size:6.53px">Groups: 5 customer(s) selected</div>
<div class="a" style="left:987px;top:40.1px;width:8.3px;height:7.8px;border:1px solid #4a5886;border-radius:1.5px;background:#eef4fc"></div>
<svg class="a" style="left:989.6px;top:42.2px" width="4" height="4" viewBox="0 0 4 4"><path d="M0.4 0.1 L3.4 1.9 L0.4 3.8Z" fill="#14284c"/></svg>
<div class="a" style="left:501px;top:52.5px;width:499px;height:26.8px;background:#f7f7f7;border-bottom:1px solid #e6e6e6"></div>
<i class="hs" style="left:522px;top:52.5px;height:26.8px"></i>
<i class="hs" style="left:596px;top:52.5px;height:26.8px"></i>
<i class="hs" style="left:669px;top:52.5px;height:26.8px"></i>
<i class="hs" style="left:742px;top:52.5px;height:26.8px"></i>
<div class="ht" style="left:501px;width:22px;top:54.6px;font-weight:normal;color:#56606e">#</div>
<div class="ht" style="left:522.4px;width:74px;top:54.6px">ID</div>
<div class="ht" style="left:596.4px;width:73.2px;top:54.6px">Name</div>
<div class="ht" style="left:669.6px;width:72.8px;top:54.6px">Customer ID</div>
<div class="fi" style="left:525px;top:64px;width:68.5px"></div>
<div class="fi" style="left:599px;top:64px;width:68px"></div>
<div class="fi" style="left:672px;top:64px;width:68px"></div>
<div class="a" style="left:501px;top:79.3px;width:499px;height:386px;overflow:hidden">
<div class="a" style="left:0;top:-79.3px">
<div class="gr sel" style="top:79.300px"><i class="vs" style="left:21px"></i><i class="vs" style="left:95px"></i><i class="vs" style="left:168px"></i><span class="c" style="left:0;width:18px;text-align:right">1</span><span class="c" style="left:21.4px;width:74px;text-align:center">2</span><span class="c" style="left:97.8px">Visitor</span><span class="c" style="left:168.6px;width:72.8px;text-align:center">2457</span><i class="fl" style="left:21px"></i><i class="fl" style="left:95px"></i><i class="fl" style="left:168px"></i></div>
<div class="gr sel" style="top:97.230px"><i class="vs" style="left:21px"></i><i class="vs" style="left:95px"></i><i class="vs" style="left:168px"></i><span class="c" style="left:0;width:18px;text-align:right">2</span><span class="c" style="left:21.4px;width:74px;text-align:center">2</span><span class="c" style="left:97.8px">Visitor</span><span class="c" style="left:168.6px;width:72.8px;text-align:center">961</span><i class="fl" style="left:21px"></i><i class="fl" style="left:95px"></i><i class="fl" style="left:168px"></i></div>
<div class="gr sel" style="top:115.160px"><i class="vs" style="left:21px"></i><i class="vs" style="left:95px"></i><i class="vs" style="left:168px"></i><span class="c" style="left:0;width:18px;text-align:right">3</span><span class="c" style="left:21.4px;width:74px;text-align:center">2</span><span class="c" style="left:97.8px">Visitor</span><span class="c" style="left:168.6px;width:72.8px;text-align:center">2668</span><i class="fl" style="left:21px"></i><i class="fl" style="left:95px"></i><i class="fl" style="left:168px"></i></div>
<div class="gr sel" style="top:133.090px"><i class="vs" style="left:21px"></i><i class="vs" style="left:95px"></i><i class="vs" style="left:168px"></i><span class="c" style="left:0;width:18px;text-align:right">4</span><span class="c" style="left:21.4px;width:74px;text-align:center">2</span><span class="c" style="left:97.8px">Visitor</span><span class="c" style="left:168.6px;width:72.8px;text-align:center">1111</span><i class="fl" style="left:21px"></i><i class="fl" style="left:95px"></i><i class="fl" style="left:168px"></i></div>
<div class="gr sel" style="top:151.020px"><i class="vs" style="left:21px"></i><i class="vs" style="left:95px"></i><i class="vs" style="left:168px"></i><span class="c" style="left:0;width:18px;text-align:right">5</span><span class="c" style="left:21.4px;width:74px;text-align:center">2</span><span class="c" style="left:97.8px">Visitor</span><span class="c" style="left:168.6px;width:72.8px;text-align:center">2218</span><i class="fl" style="left:21px"></i><i class="fl" style="left:95px"></i><i class="fl" style="left:168px"></i></div>
<div class="gr sel" style="top:168.950px"><i class="vs" style="left:21px"></i><i class="vs" style="left:95px"></i><i class="vs" style="left:168px"></i><span class="c" style="left:0;width:18px;text-align:right">6</span><span class="c" style="left:21.4px;width:74px;text-align:center">1</span><span class="c" style="left:97.8px">Default</span><span class="c" style="left:168.6px;width:72.8px;text-align:center">961</span></div>
<div class="gr" style="top:186.880px"><span class="c" style="left:0;width:18px;text-align:right">7</span><span class="c" style="left:21.4px;width:74px;text-align:center">1</span><span class="c" style="left:97.8px">Default</span><span class="c" style="left:168.6px;width:72.8px;text-align:center">1111</span></div>
<div class="gr alt" style="top:204.810px"><span class="c" style="left:0;width:18px;text-align:right">8</span><span class="c" style="left:21.4px;width:74px;text-align:center">1</span><span class="c" style="left:97.8px">Default</span><span class="c" style="left:168.6px;width:72.8px;text-align:center">2218</span></div>
<div class="gr" style="top:222.740px"><span class="c" style="left:0;width:18px;text-align:right">9</span><span class="c" style="left:21.4px;width:74px;text-align:center">1</span><span class="c" style="left:97.8px">Default</span><span class="c" style="left:168.6px;width:72.8px;text-align:center">2457</span></div>
<div class="gr alt" style="top:240.670px"><span class="c" style="left:0;width:18px;text-align:right">10</span><span class="c" style="left:21.4px;width:74px;text-align:center">3</span><span class="c" style="left:97.8px">Guest</span><span class="c" style="left:168.6px;width:72.8px;text-align:center">2668</span></div>
</div></div>
<div class="a" style="left:501px;top:465px;width:499px;height:20px;background:#cfdef1;border-top:1px solid #bcd2ef"></div>
<div class="pt" style="left:919px;top:471px;font-size:6.85px">Items: 6 selected / 10 total</div>

<div class="a" style="left:999px;top:37px;width:1px;height:15px;background:#c8d9f0"></div>
</body></html>
